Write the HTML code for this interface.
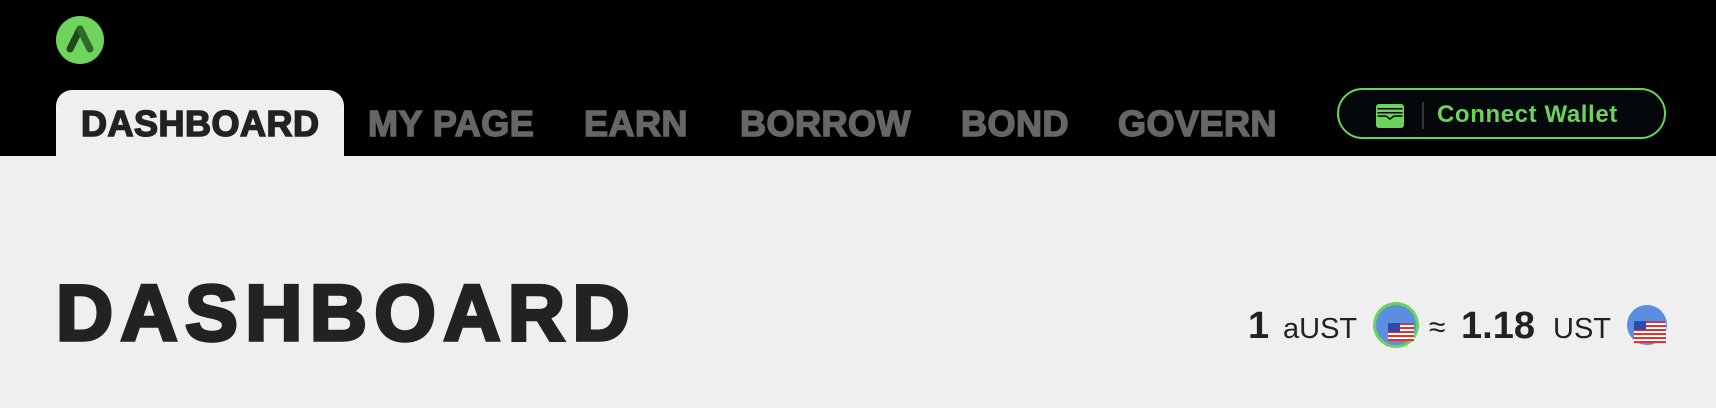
<!DOCTYPE html>
<html><head><meta charset="utf-8"><style>
body{margin:0;width:1716px;height:408px;background:#efefef;position:relative;overflow:hidden;font-family:"Liberation Sans",sans-serif}
.hdr{position:absolute;left:0;top:0;width:1716px;height:156px;background:#000}
.logo{position:absolute;left:56px;top:16px;width:48px;height:48px;border-radius:50%;background:#6fd35c}
.tab{position:absolute;left:56px;top:90px;width:288px;height:66px;background:#efefef;border-radius:16px 16px 0 0}
.n{position:absolute;top:104px;font-weight:bold;font-size:36px;color:#666;line-height:40px;white-space:nowrap;-webkit-text-stroke:1.5px currentColor;letter-spacing:.5px}
.btn{position:absolute;left:1337px;top:88px;width:325px;height:47px;border:2px solid #6ad35a;border-radius:26px;background:#05080a}
.h1{position:absolute;left:56px;top:273px;font-size:79px;font-weight:bold;color:#222;line-height:80px;-webkit-text-stroke:3.5px #222;letter-spacing:7.5px}
.r{position:absolute;top:300px;color:#222;line-height:48px;white-space:nowrap}
.coin{position:absolute;width:40px;height:40px;border-radius:50%;background:#5b8de0}
.flag{position:absolute;width:26px;height:18px;background:repeating-linear-gradient(#d33 0 2px,#fff 2px 4px)}
.flag::before{content:"";position:absolute;left:0;top:0;width:12px;height:9px;background:#2a4ba8}
</style></head><body>
<div class="hdr"></div>
<div class="logo"><svg width="48" height="48" viewBox="0 0 48 48"><path d="M24 13 L14 33" stroke="#1e4a1a" stroke-width="7" stroke-linecap="round"/><path d="M24 13 L34 33" stroke="#2f6b27" stroke-width="7" stroke-linecap="round"/></svg></div>
<div class="tab"></div>
<div class="n" style="left:81px;color:#222">DASHBOARD</div>
<div class="n" style="left:368px">MY PAGE</div>
<div class="n" style="left:584px">EARN</div>
<div class="n" style="left:740px">BORROW</div>
<div class="n" style="left:961px">BOND</div>
<div class="n" style="left:1118px">GOVERN</div>
<div class="btn"></div>
<svg style="position:absolute;left:1376px;top:104px" width="28" height="24" viewBox="0 0 28 24"><rect x="0" y="0" width="28" height="24" rx="3" fill="#6ad35a"/><rect x="1.5" y="4" width="25" height="1.5" fill="#05080a"/><rect x="1.5" y="8" width="25" height="1.5" fill="#05080a"/><path d="M1.5 12 H10 L14 15 L18 12 H26.5" stroke="#05080a" stroke-width="1.5" fill="none"/></svg>
<div style="position:absolute;left:1422px;top:102px;width:2px;height:27px;background:#333"></div>
<div style="position:absolute;left:1437px;top:99px;font-size:24px;font-weight:bold;color:#6ad35a;line-height:32px;letter-spacing:.6px">Connect Wallet</div>
<div class="h1">DASHBOARD</div>
<div class="r" style="left:1248px;font-size:38px;font-weight:bold;top:302px">1</div>
<div class="r" style="left:1283px;font-size:29px;top:305px">aUST</div>
<div class="coin" style="left:1376px;top:305px;box-shadow:0 0 0 3px #6ad35a"></div>
<div class="flag" style="left:1388px;top:323px"></div>
<div class="r" style="left:1429px;font-size:30px;top:304px">≈</div>
<div class="r" style="left:1461px;font-size:38px;font-weight:bold;top:302px">1.18</div>
<div class="r" style="left:1553px;font-size:29px;top:305px">UST</div>
<div class="coin" style="left:1627px;top:305px"></div>
<div class="flag" style="left:1634px;top:321px;width:32px;height:22px"></div>
</body></html>
